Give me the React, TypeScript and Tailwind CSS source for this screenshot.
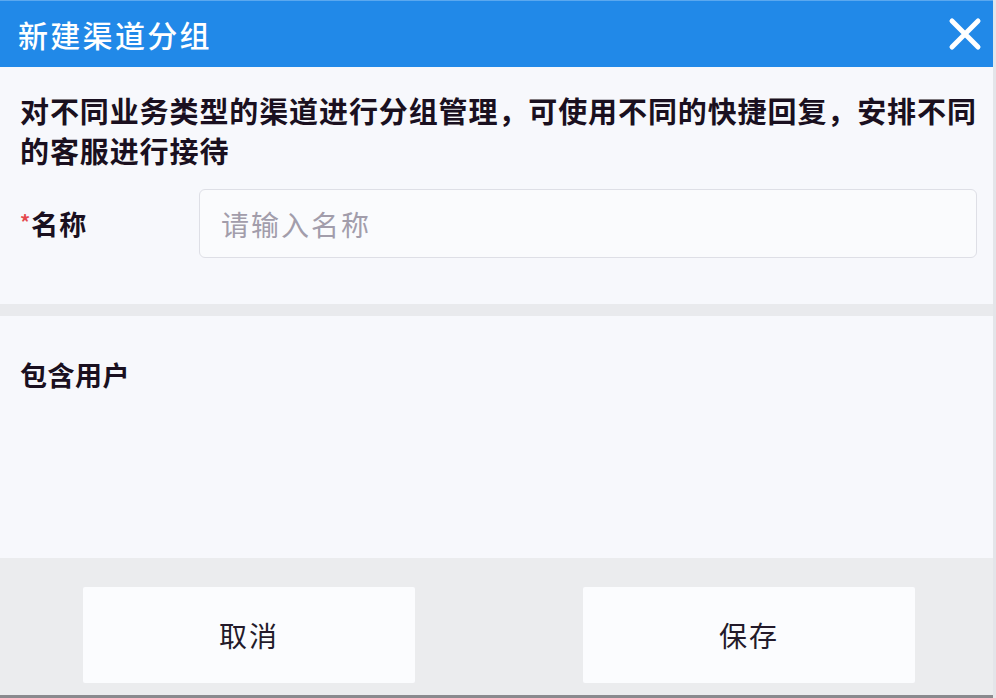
export default function App() {
  return (
    <div
      className="w-[996px] h-[698px] flex flex-col bg-[#f7f8fc] overflow-hidden border-r-[3px] border-[#e4e5e9]"
      style={{ fontFamily: '"Noto Sans CJK SC", "Noto Sans", sans-serif' }}
    >
      {/* Header */}
      <div className="h-[67px] shrink-0 flex items-center justify-between bg-[#2189e8] border-t border-[#5aa8ef] pl-[18px] pr-[11px]">
        <div className="text-white text-[30px] font-medium tracking-[2.3px] leading-none">新建渠道分组</div>
        <svg width="34" height="34" viewBox="0 0 34 34">
          <path d="M4 4 L30 30 M30 4 L4 30" stroke="white" strokeWidth="5" strokeLinecap="round" />
        </svg>
      </div>

      {/* Form */}
      <div className="shrink-0 pl-[20px] pr-[10px] pt-[23px] pb-[46px]">
        <p className="text-[29px] leading-[40px] tracking-[0.9px] font-bold text-[#1a1020]">
          对不同业务类型的渠道进行分组管理，可使用不同的快捷回复，安排不同的客服进行接待
        </p>
        <div className="flex items-center mt-[19px]">
          <div className="w-[179px] shrink-0 flex items-start text-[27px] font-bold text-[#1a1020] tracking-[1px]">
            <span className="text-[#e5484d] text-[20px] leading-none mt-[2px]">*</span>
            <span className="leading-none">名称</span>
          </div>
          <div className="w-[778px] h-[69px] rounded-[6px] border border-[#dedfe6] bg-[#fafbfd] flex items-center pl-[21px]">
            <span className="text-[28px] tracking-[2px] text-[#a29dab] leading-none">请输入名称</span>
          </div>
        </div>
      </div>

      {/* Separator */}
      <div className="h-[12px] shrink-0 bg-[#e9eaed]" />

      {/* Users */}
      <div className="flex-1 px-[20px] pt-[39px]">
        <div className="text-[27px] leading-[40px] font-bold tracking-[0.5px] text-[#1a1020]">包含用户</div>
      </div>

      {/* Footer */}
      <div className="h-[140px] shrink-0 bg-[#ebecee] border-b-[3px] border-[#8a8a8e] flex items-start pt-[29px] pl-[83px] gap-[168px]">
        <button className="w-[332px] h-[96px] bg-[#fbfcfe] rounded-[2px] text-[28px] tracking-[2px] text-[#231a2a]">
          取消
        </button>
        <button className="w-[332px] h-[96px] bg-[#fbfcfe] rounded-[2px] text-[28px] tracking-[2px] text-[#231a2a]">
          保存
        </button>
      </div>
    </div>
  )
}
